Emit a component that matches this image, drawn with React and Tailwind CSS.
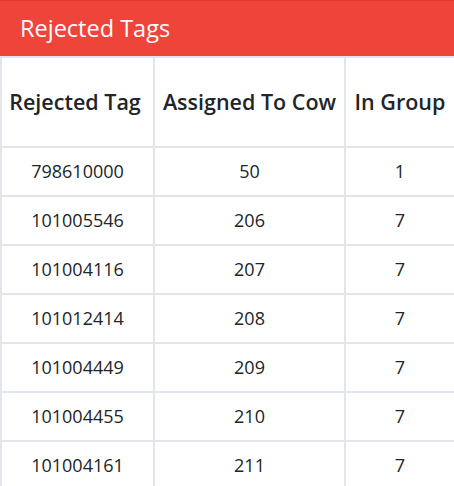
const rows = [
  ['798610000', '50', '1'],
  ['101005546', '206', '7'],
  ['101004116', '207', '7'],
  ['101012414', '208', '7'],
  ['101004449', '209', '7'],
  ['101004455', '210', '7'],
  ['101004161', '211', '7'],
];

export default function App() {
  return (
    <div className="w-[454px] h-[486px] overflow-hidden bg-white font-['Open_Sans',sans-serif] text-[#212529]">
      <div className="h-[56px] bg-[#ef4439] border-t border-[#e33a30] flex items-center px-5">
        <h1 className="text-[23.5px] text-white leading-none">Rejected Tags</h1>
      </div>
      <table className="w-[454px] table-fixed border-collapse">
        <colgroup>
          <col className="w-[153px]" />
          <col className="w-[191px]" />
          <col className="w-[110px]" />
        </colgroup>
        <thead>
          <tr className="h-[90px]">
            <th className="border-2 border-[#e2e5e9] font-semibold text-[21.5px] text-center px-0 pr-[5px] whitespace-nowrap">Rejected Tag</th>
            <th className="border-2 border-[#e2e5e9] font-semibold text-[21.5px] text-center px-0 whitespace-nowrap">Assigned To Cow</th>
            <th className="border-2 border-[#e2e5e9] font-semibold text-[21.5px] text-center px-0 whitespace-nowrap">In Group</th>
          </tr>
        </thead>
        <tbody>
          {rows.map((r) => (
            <tr key={r[0]} className="h-[49px]">
              {r.map((c, i) => (
                <td key={i} className="border-2 border-[#e2e5e9] text-center text-[18px]">{c}</td>
              ))}
            </tr>
          ))}
        </tbody>
      </table>
    </div>
  );
}
